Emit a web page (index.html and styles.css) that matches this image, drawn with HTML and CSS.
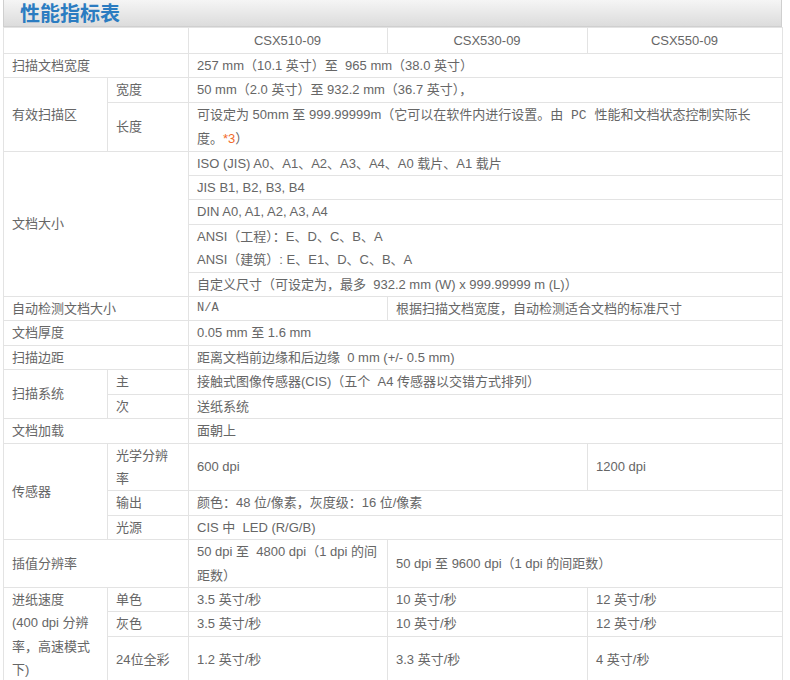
FILE: index.html
```html
<!DOCTYPE html>
<html lang="zh-CN">
<head>
<meta charset="utf-8">
<title>性能指标表</title>
<link rel="stylesheet" href="styles.css">
</head>
<body>
<div class="panel">
  <div class="panel-head"><h2 class="panel-title">性能指标表</h2></div>
  <table class="spec">
    <colgroup>
      <col class="c-l1"><col class="c-l2"><col class="c-d1"><col class="c-d2"><col class="c-d3">
    </colgroup>
    <tr class="models">
      <td colspan="2"></td>
      <td class="center">CSX510-09</td>
      <td class="center">CSX530-09</td>
      <td class="center">CSX550-09</td>
    </tr>
    <tr><td colspan="2">扫描文档宽度</td><td colspan="3">257 mm（10.1 英寸）至&nbsp; 965 mm（38.0 英寸）</td></tr>
    <tr><td rowspan="2">有效扫描区</td><td>宽度</td><td colspan="3">50 mm（2.0 英寸）至 932.2 mm（36.7 英寸），</td></tr>
    <tr><td>长度</td><td colspan="3" class="wide-pad">可设定为 50mm 至 999.99999m（它可以在软件内进行设置。由<span class="mono-lg"> PC </span>性能和文档状态控制实际长度。<span class="note">*3</span>）</td></tr>
    <tr><td colspan="2" rowspan="5">文档大小</td><td colspan="3">ISO (JIS) A0、A1、A2、A3、A4、A0 载片、A1 载片</td></tr>
    <tr><td colspan="3">JIS B1, B2, B3, B4</td></tr>
    <tr><td colspan="3">DIN A0, A1, A2, A3, A4</td></tr>
    <tr><td colspan="3">ANSI（工程）：E、D、C、B、A<br>ANSI（建筑）: E、E1、D、C、B、A</td></tr>
    <tr><td colspan="3">自定义尺寸（可设定为，最多&nbsp; 932.2 mm (W) x 999.99999 m (L)）</td></tr>
    <tr><td colspan="2">自动检测文档大小</td><td class="mono">N/A</td><td colspan="2">根据扫描文档宽度，自动检测适合文档的标准尺寸</td></tr>
    <tr><td colspan="2">文档厚度</td><td colspan="3">0.05 mm 至 1.6 mm</td></tr>
    <tr><td colspan="2">扫描边距</td><td colspan="3">距离文档前边缘和后边缘&nbsp; 0 mm (+/- 0.5 mm)</td></tr>
    <tr><td rowspan="2">扫描系统</td><td>主</td><td colspan="3">接触式图像传感器(CIS)（五个&nbsp; A4 传感器以交错方式排列）</td></tr>
    <tr><td>次</td><td colspan="3">送纸系统</td></tr>
    <tr><td colspan="2">文档加载</td><td colspan="3">面朝上</td></tr>
    <tr><td rowspan="3">传感器</td><td>光学分辨率</td><td colspan="2">600 dpi</td><td>1200 dpi</td></tr>
    <tr><td>输出</td><td colspan="3">颜色：48 位/像素，灰度级：16 位/像素</td></tr>
    <tr><td>光源</td><td colspan="3">CIS 中&nbsp; LED (R/G/B)</td></tr>
    <tr><td colspan="2">插值分辨率</td><td>50 dpi 至&nbsp; 4800 dpi（1 dpi 的间距数）</td><td colspan="2">50 dpi 至 9600 dpi（1 dpi 的间距数）</td></tr>
    <tr><td rowspan="3" class="top">进纸速度<br>(400 dpi 分辨率，高速模式下)</td><td>单色</td><td>3.5 英寸/秒</td><td>10 英寸/秒</td><td>12 英寸/秒</td></tr>
    <tr><td>灰色</td><td>3.5 英寸/秒</td><td>10 英寸/秒</td><td>12 英寸/秒</td></tr>
    <tr class="tall"><td>24位全彩</td><td>1.2 英寸/秒</td><td>3.3 英寸/秒</td><td>4 英寸/秒</td></tr>
  </table>
</div>
</body>
</html>
```

FILE: styles.css
```css
html, body {
  margin: 0;
  padding: 0;
  background: #ffffff;
}
body {
  font-family: "Liberation Sans", "Noto Sans CJK SC", sans-serif;
  font-size: 13px;
  color: #666666;
}
.panel {
  margin-left: 3px;
  width: 779px;
}
.panel-head {
  height: 26px;
  display: flex;
  align-items: center;
  border: 1px solid #cfcfcf;
  border-top: none;
  background: linear-gradient(#f5f5f5, #dcdcdc);
}
.panel-title {
  margin: 0;
  padding-left: 16px;
  font-family: "Noto Sans CJK SC", sans-serif;
  font-size: 20px;
  font-weight: bold;
  line-height: 22px;
  color: #2b7cc1;
}
.spec {
  width: 779px;
  border-collapse: collapse;
  table-layout: fixed;
  border: 1px solid #d7d7d7;
  border-top: none;
}
.c-l1 { width: 104px; }
.c-l2 { width: 81px; }
.c-d1 { width: 199px; }
.c-d2 { width: 200px; }
.c-d3 { width: 195px; }
.spec td {
  border: 1px solid #e3e3e3;
  padding: 0 9px 0 8px;
  line-height: 23.4px;
  vertical-align: middle;
}
.spec .models td {
  height: 25px;
}
.spec td.center {
  text-align: center;
}
.spec td.top {
  vertical-align: top;
}
.spec td.wide-pad {
  padding-right: 16px;
}
.spec .tall td {
  height: 46px;
}
.mono {
  font-family: "Liberation Mono", monospace;
  font-size: 12px;
}
.mono-lg {
  font-family: "Liberation Mono", monospace;
  font-size: 13px;
}
.note {
  color: #f26b2a;
}
```
